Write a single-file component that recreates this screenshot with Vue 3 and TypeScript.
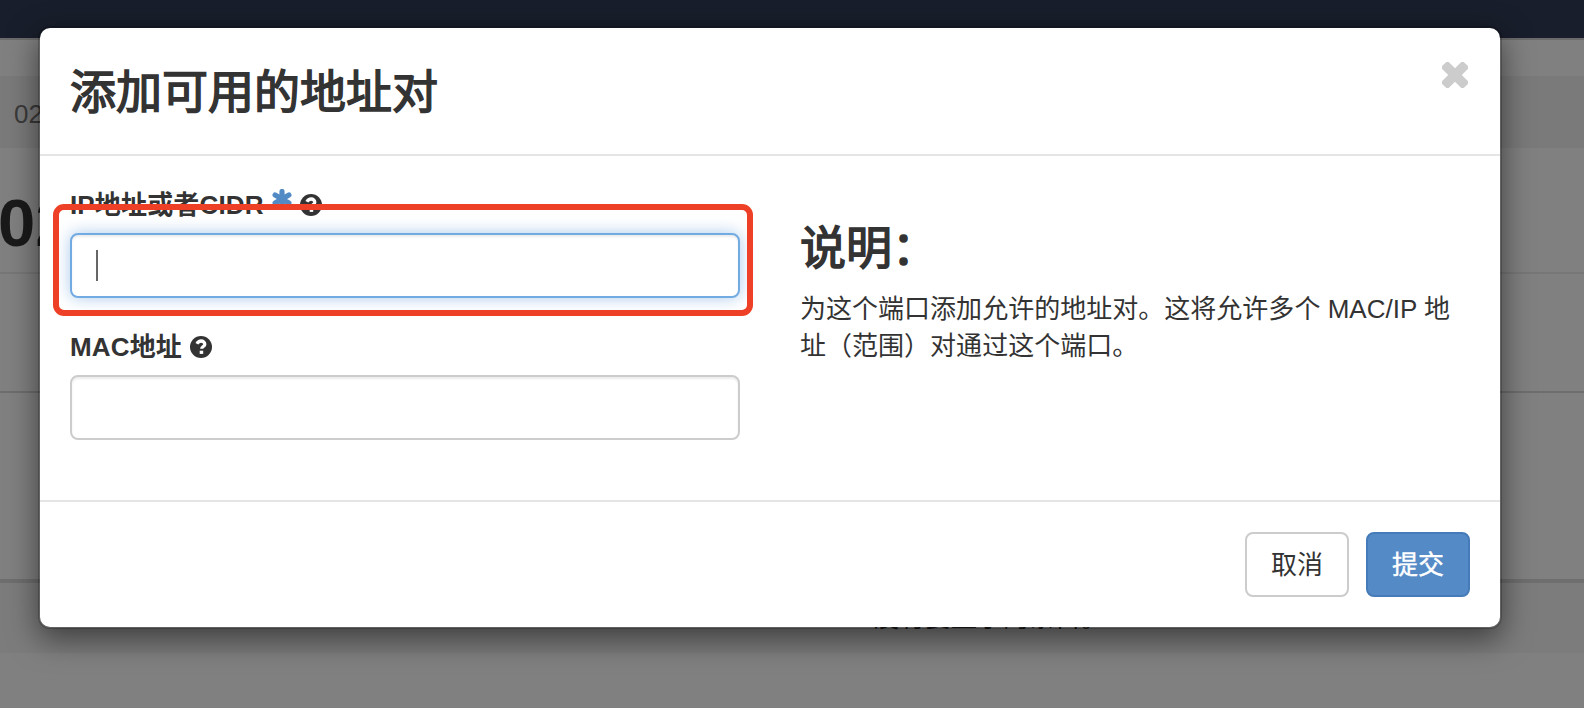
<script setup lang="ts">
import { ref } from 'vue'

const address = ref('')
const mac = ref('')
const instance = '02'
</script>

<template>
  <div class="screen">
    <div class="page">
      <div class="navbar"></div>
      <div class="breadcrumb">{{ instance }}</div>
      <div class="page-title">{{ instance }}</div>
      <div class="toolbar"></div>
      <div class="table-head"></div>
      <div class="table-empty">没有要显示的条目。</div>
    </div>

    <div class="modal">
      <header class="modal-header">
        <h3>添加可用的地址对</h3>
        <svg class="close" viewBox="0 0 26 26">
          <rect x="-2.4" y="8.2" width="30.8" height="9.6" rx="2.4" transform="rotate(45 13 13)" />
          <rect x="-2.4" y="8.2" width="30.8" height="9.6" rx="2.4" transform="rotate(-45 13 13)" />
        </svg>
      </header>
      <div class="modal-body">
        <div class="form">
          <div class="group">
            <label>
              <span>IP地址或者CIDR</span>
              <svg class="required" viewBox="0 0 20 20">
                <path d="M10 2.5V17.5M3.1 6L16.9 14M16.9 6L3.1 14" />
              </svg>
              <svg class="help" viewBox="0 0 22 22">
                <circle cx="11" cy="11" r="11" />
                <path d="M6.9 7.8C8.2 5.5 9.6 5 11.2 5c2 0 3.6 1.3 3.6 3.2 0 2.3-3.1 2.4-3.1 4.6" />
                <rect x="9.7" y="14.7" width="3.5" height="3.2" />
              </svg>
            </label>
            <div class="field focused">
              <span class="caret"></span>
              <span>{{ address }}</span>
            </div>
            <div class="marker"></div>
          </div>
          <div class="group">
            <label>
              <span>MAC地址</span>
              <svg class="help" viewBox="0 0 22 22">
                <circle cx="11" cy="11" r="11" />
                <path d="M6.9 7.8C8.2 5.5 9.6 5 11.2 5c2 0 3.6 1.3 3.6 3.2 0 2.3-3.1 2.4-3.1 4.6" />
                <rect x="9.7" y="14.7" width="3.5" height="3.2" />
              </svg>
            </label>
            <div class="field">{{ mac }}</div>
          </div>
        </div>
        <div class="info">
          <h3>说明：</h3>
          <p>为这个端口添加允许的地址对。这将允许多个 MAC/IP 地址（范围）对通过这个端口。</p>
        </div>
      </div>
      <footer class="modal-footer">
        <button class="btn">取消</button>
        <button class="btn primary">提交</button>
      </footer>
    </div>
  </div>
</template>

<style>
body {
  margin: 0;
  overflow: hidden;
}
</style>

<style scoped>
.screen {
  position: relative;
  width: 1584px;
  height: 708px;
  overflow: hidden;
  background: #808080;
  color: #333;
  font: 26px/37px "Liberation Sans", "Noto Sans CJK SC", sans-serif;
}
.screen * {
  box-sizing: border-box;
}
.navbar {
  height: 40px;
  margin-bottom: 36px;
  background: #181e2b;
  border-bottom: 2px solid #6b6b6b;
}
.breadcrumb {
  height: 72px;
  padding-left: 14px;
  line-height: 76px;
  background: #7a7a7a;
  color: #3a3a3a;
}
.page-title {
  height: 126px;
  padding-top: 36px;
  border-bottom: 2px solid #777;
  font-size: 67px;
  line-height: 78px;
  font-weight: 700;
  text-indent: -2px;
  color: #1a1a1a;
}
.toolbar {
  height: 119px;
  border-bottom: 2px solid #6e6e6e;
}
.table-head {
  height: 190px;
  border-bottom: 4px solid #6e6e6e;
}
.table-empty {
  height: 70px;
  padding-left: 873px;
  line-height: 71px;
  background: #7c7c7c;
  color: #1a1a1a;
}
.modal {
  position: absolute;
  left: 38px;
  top: 26px;
  width: 1464px;
  height: 603px;
  display: flex;
  flex-direction: column;
  background: #fff;
  background-clip: padding-box;
  border: 2px solid rgba(0, 0, 0, 0.2);
  border-radius: 12px;
  box-shadow: 0 10px 30px rgba(0, 0, 0, 0.5);
}
.modal-header {
  height: 128px;
  display: flex;
  justify-content: space-between;
  padding: 34px 30px 0;
  border-bottom: 2px solid #e5e5e5;
}
h3 {
  margin: 0;
  font-size: 46px;
  line-height: 60px;
  font-weight: 400;
  -webkit-text-stroke: 1.5px #333;
}
.close {
  width: 26px;
  height: 26px;
  margin: 0.4px 2.5px 0 0;
  fill: #ccc;
}
.modal-body {
  flex: 1;
  display: flex;
  gap: 60px;
  padding: 30px;
}
.form {
  width: 670px;
}
.group {
  position: relative;
  height: 142px;
}
label {
  display: flex;
  align-items: center;
  height: 37px;
  margin-bottom: 10px;
  padding-top: 2px;
  font-weight: 700;
  letter-spacing: 0.15px;
}
.required {
  width: 20px;
  height: 20px;
  margin: -13px 0 0 8.5px;
}
.required path {
  stroke: #528ac6;
  stroke-width: 5.2;
  stroke-linecap: round;
}
.help {
  width: 22px;
  height: 22px;
  margin: -1px 0 0 8px;
}
.help circle {
  fill: #333;
}
.help rect {
  fill: #fff;
}
.help path {
  fill: none;
  stroke: #fff;
  stroke-width: 3.3;
}
.field {
  height: 65px;
  display: flex;
  align-items: center;
  padding-left: 24px;
  border: 2px solid #ccc;
  border-radius: 8px;
  background: #fff;
  box-shadow: inset 0 2px 2px rgba(0, 0, 0, 0.075);
}
.field.focused {
  border-color: #72abe2;
  box-shadow: inset 0 2px 2px rgba(0, 0, 0, 0.075), 0 0 16px rgba(102, 158, 220, 0.55);
}
.caret {
  width: 2px;
  height: 31px;
  background: #666;
}
.marker {
  position: absolute;
  left: -17px;
  top: 18px;
  width: 700px;
  height: 112px;
  border: 6px solid #ee4026;
  border-radius: 11px;
}
.info {
  width: 670px;
  padding-top: 32px;
}
.info p {
  margin: 13px 0 0;
  letter-spacing: 0.02px;
}
.modal-footer {
  height: 127px;
  display: flex;
  justify-content: flex-end;
  gap: 17px;
  padding: 30px;
  border-top: 2px solid #e5e5e5;
}
.btn {
  width: 104px;
  height: 65px;
  padding: 2px 0 0;
  border: 2px solid #ccc;
  border-radius: 8px;
  background: #fff;
  color: #333;
  font: inherit;
}
.btn.primary {
  border-color: #457bb9;
  background: #548ac6;
  color: #fff;
  -webkit-text-stroke: 0.4px #fff;
}
</style>
